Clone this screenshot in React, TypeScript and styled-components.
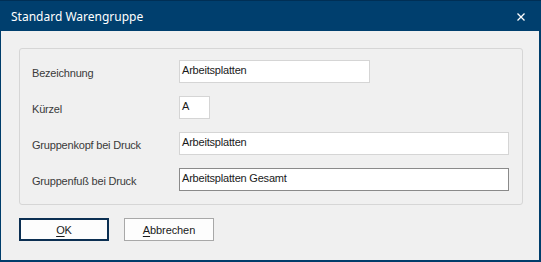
import React from "react";
import styled, { createGlobalStyle } from "styled-components";

const Global = createGlobalStyle`
  html, body { margin: 0; padding: 0; background: #f0f0f0; }
  * { box-sizing: border-box; }
`;

const Window = styled.div`
  width: 541px;
  height: 262px;
  background: #f0f0f0;
  border-left: 1px solid #003d6b;
  border-right: 2px solid #003d6b;
  border-bottom: 2px solid #003d6b;
  display: flex;
  flex-direction: column;
  font-family: "Liberation Sans", Arial, sans-serif;
`;

const TitleBar = styled.div`
  height: 31px;
  flex: none;
  background: #003f6e;
  border-top: 1px solid #002f55;
  display: flex;
  align-items: center;
  justify-content: space-between;
  padding: 0 16px 0 11px;
  margin: 0 -2px 0 -1px;
  color: #ffffff;
  font-family: "Noto Sans", "Open Sans", sans-serif;
  font-size: 12px;
`;

const Title = styled.span`
  padding-top: 1px;
`;

const Close = styled.svg`
  width: 8px;
  height: 8px;
  margin-top: 2px;
`;

const Body = styled.div`
  flex: 1;
  padding: 17px 17px 0 18px;
  display: flex;
  flex-direction: column;
`;

const Panel = styled.div`
  width: 504px;
  height: 157px;
  border: 1px solid #d6d6d6;
  border-radius: 3px;
  padding: 11px 0 0 12px;
  display: flex;
  flex-direction: column;
  gap: 13px;
`;

const Row = styled.div`
  display: flex;
  align-items: flex-start;
  height: 23px;
`;

const Label = styled.label`
  width: 147px;
  flex: none;
  font-size: 11px;
  line-height: 13px;
  letter-spacing: -0.2px;
  padding-top: 7px;
  color: #3a3a3a;
`;

const Field = styled.div<{ $w: number; $active?: boolean }>`
  width: ${(p) => p.$w}px;
  height: 23px;
  background: #ffffff;
  border: 1px solid ${(p) => (p.$active ? "#8a8a8a" : "#d5d5d5")};
  font-size: 11px;
  line-height: 13px;
  letter-spacing: -0.2px;
  padding: 3px 0 0 2px;
  color: #1a1a1a;
  white-space: nowrap;
`;

const Buttons = styled.div`
  display: flex;
  gap: 15px;
  margin-top: 13px;
`;

const Button = styled.button<{ $default?: boolean }>`
  width: 90px;
  height: 23px;
  background: #fdfdfd;
  border: ${(p) => (p.$default ? "2px solid #0b2f52" : "1px solid #a8a8a8")};
  font-family: "Liberation Sans", Arial, sans-serif;
  font-size: 11px;
  letter-spacing: -0.1px;
  color: #1a1a1a;
  padding: 0;
  display: flex;
  align-items: center;
  justify-content: center;
  u { text-decoration-thickness: 1px; text-underline-offset: 2px; }
`;

export default function App() {
  return (
    <>
      <Global />
      <Window>
        <TitleBar>
          <Title>Standard Warengruppe</Title>
          <Close viewBox="0 0 8 8">
            <path d="M0.5 0.5 L7.5 7.5 M7.5 0.5 L0.5 7.5" stroke="#fff" strokeWidth="1.3" />
          </Close>
        </TitleBar>
        <Body>
          <Panel>
            <Row>
              <Label>Bezeichnung</Label>
              <Field $w={191}>Arbeitsplatten</Field>
            </Row>
            <Row>
              <Label>Kürzel</Label>
              <Field $w={31}>A</Field>
            </Row>
            <Row>
              <Label>Gruppenkopf bei Druck</Label>
              <Field $w={330}>Arbeitsplatten</Field>
            </Row>
            <Row>
              <Label>Gruppenfuß bei Druck</Label>
              <Field $w={330} $active>Arbeitsplatten Gesamt</Field>
            </Row>
          </Panel>
          <Buttons>
            <Button $default><u>O</u>K</Button>
            <Button><u>A</u>bbrechen</Button>
          </Buttons>
        </Body>
      </Window>
    </>
  );
}
